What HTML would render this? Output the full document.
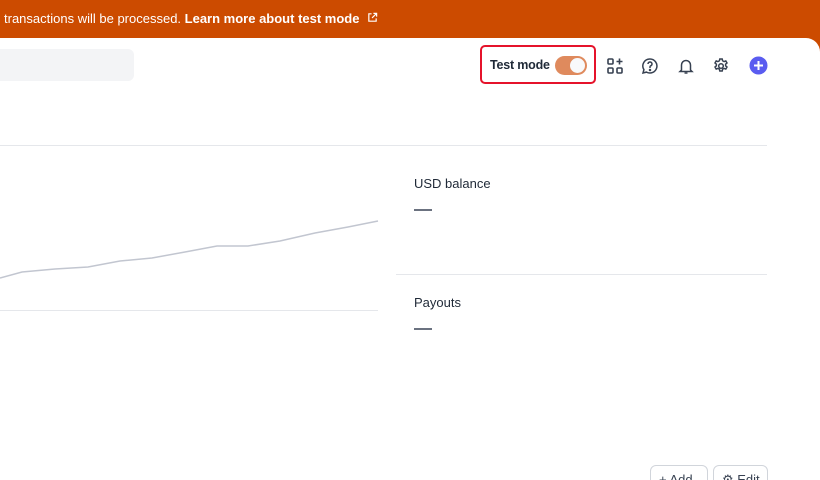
<!DOCTYPE html>
<html style="overflow:hidden;height:480px"><head><style>
body{margin:0;width:820px;height:480px;overflow:hidden;background:#cc4b00;font-family:"Liberation Sans",sans-serif;position:relative}
.banner{position:absolute;left:0;top:0;width:820px;height:38px;color:#fff;font-size:13px;line-height:38px;padding-left:4px;box-sizing:border-box;white-space:nowrap}
.main{position:absolute;left:0;top:38px;width:820px;height:442px;background:#fff;border-top-right-radius:14px;overflow:hidden}
.search{position:absolute;left:-10px;top:11px;width:144px;height:32px;background:#f3f4f6;border-radius:6px}
.tm{position:absolute;left:480px;top:7px;width:116px;height:39px;border:2px solid #e5132b;border-radius:5px;box-sizing:border-box}
.tm span{position:absolute;left:8px;top:11px;font-size:12.5px;font-weight:bold;color:#1f2937;letter-spacing:-0.2px}
.tog{position:absolute;left:73px;top:9px;width:32px;height:19px;border-radius:10px;background:#df8a5d}
.tog i{position:absolute;right:2px;top:2px;width:15px;height:15px;border-radius:50%;background:#f8f9fb}
.ic{position:absolute;top:19px}
.hr{position:absolute;height:1px;background:#e5e7eb}
.lbl{position:absolute;font-size:13px;color:#1f2937}
.dash{position:absolute;width:18px;height:2px;background:#6b7280}
.btn{position:absolute;top:427px;height:30px;border:1px solid #d1d5db;border-radius:6px;font-size:13px;color:#374151;box-sizing:border-box;padding:6px 8px;white-space:nowrap}
</style></head><body>
<div class="banner">transactions will be processed. <b>Learn more about test mode</b> &nbsp;<svg width="11" height="11" viewBox="0 0 12 12" fill="none" stroke="#fff" stroke-width="1.3"><path d="M5 2H2v8h8V7M7 1.5h3.5V5M10.5 1.5L5.5 6.5"/></svg></div>
<div class="main">
<div class="search"></div>
<div class="tm"><span>Test mode</span><div class="tog"><i></i></div></div>
<svg class="ic" style="left:606px" width="18" height="18" viewBox="0 0 18 18" fill="none" stroke="#374151" stroke-width="1.6"><rect x="2" y="2" width="5" height="5" rx="1"/><rect x="2" y="11" width="5" height="5" rx="1"/><rect x="11" y="11" width="5" height="5" rx="1"/><path d="M13.5 1.5v6M10.5 4.5h6"/></svg>
<svg class="ic" style="left:641px" width="18" height="18" viewBox="0 0 18 18" fill="none" stroke="#374151" stroke-width="1.5"><path d="M9 2a7 7 0 1 1-3.5 13.1L2 16l.9-3.3A7 7 0 0 1 9 2z"/><path d="M7 7a2 2 0 1 1 2.5 1.9c-.4.2-.5.5-.5 1V11"/><circle cx="9" cy="13" r=".5" fill="#374151"/></svg>
<svg class="ic" style="left:677px" width="18" height="18" viewBox="0 0 18 18" fill="none" stroke="#374151" stroke-width="1.5"><path d="M4.5 13V8a4.5 4.5 0 0 1 9 0v5l1.5 1.5H3z"/><path d="M7.5 16h3"/></svg>
<svg class="ic" style="left:712px" width="18" height="18" viewBox="0 0 18 18" fill="none" stroke="#374151" stroke-width="1.5"><circle cx="9" cy="9" r="2.3"/><path d="M7.8 2h2.4l.4 1.8 1.5.8 1.7-.7 1.2 2.1-1.4 1.2v1.6l1.4 1.2-1.2 2.1-1.7-.7-1.5.8-.4 1.8H7.8l-.4-1.8-1.5-.8-1.7.7-1.2-2.1 1.4-1.2V7.2L3 6l1.2-2.1 1.7.7 1.5-.8z"/></svg>
<svg class="ic" style="left:749px;top:18px" width="19" height="19" viewBox="0 0 19 19"><circle cx="9.5" cy="9.5" r="9" fill="#5a5cf0"/><path d="M9.5 5v9M5 9.5h9" stroke="#fff" stroke-width="2"/></svg>
<div class="hr" style="left:0;top:107px;width:767px"></div>
<svg style="position:absolute;left:0;top:140px" width="380" height="110"><polyline fill="none" stroke="#c2c6d0" stroke-width="1.5" points="0,100 22,94 55,91 88,89 120,83 152,80 185,74 217,68 248,68 280,63 315,55 348,49 378,43"/></svg>
<div class="hr" style="left:0;top:272px;width:378px"></div>
<div class="lbl" style="left:414px;top:138px">USD balance</div>
<div class="dash" style="left:414px;top:171px"></div>
<div class="hr" style="left:396px;top:236px;width:371px"></div>
<div class="lbl" style="left:414px;top:257px">Payouts</div>
<div class="dash" style="left:414px;top:290px"></div>
<div class="btn" style="left:650px;width:58px">+ Add</div>
<div class="btn" style="left:713px;width:55px">⚙ Edit</div>
</div>
</body></html>
